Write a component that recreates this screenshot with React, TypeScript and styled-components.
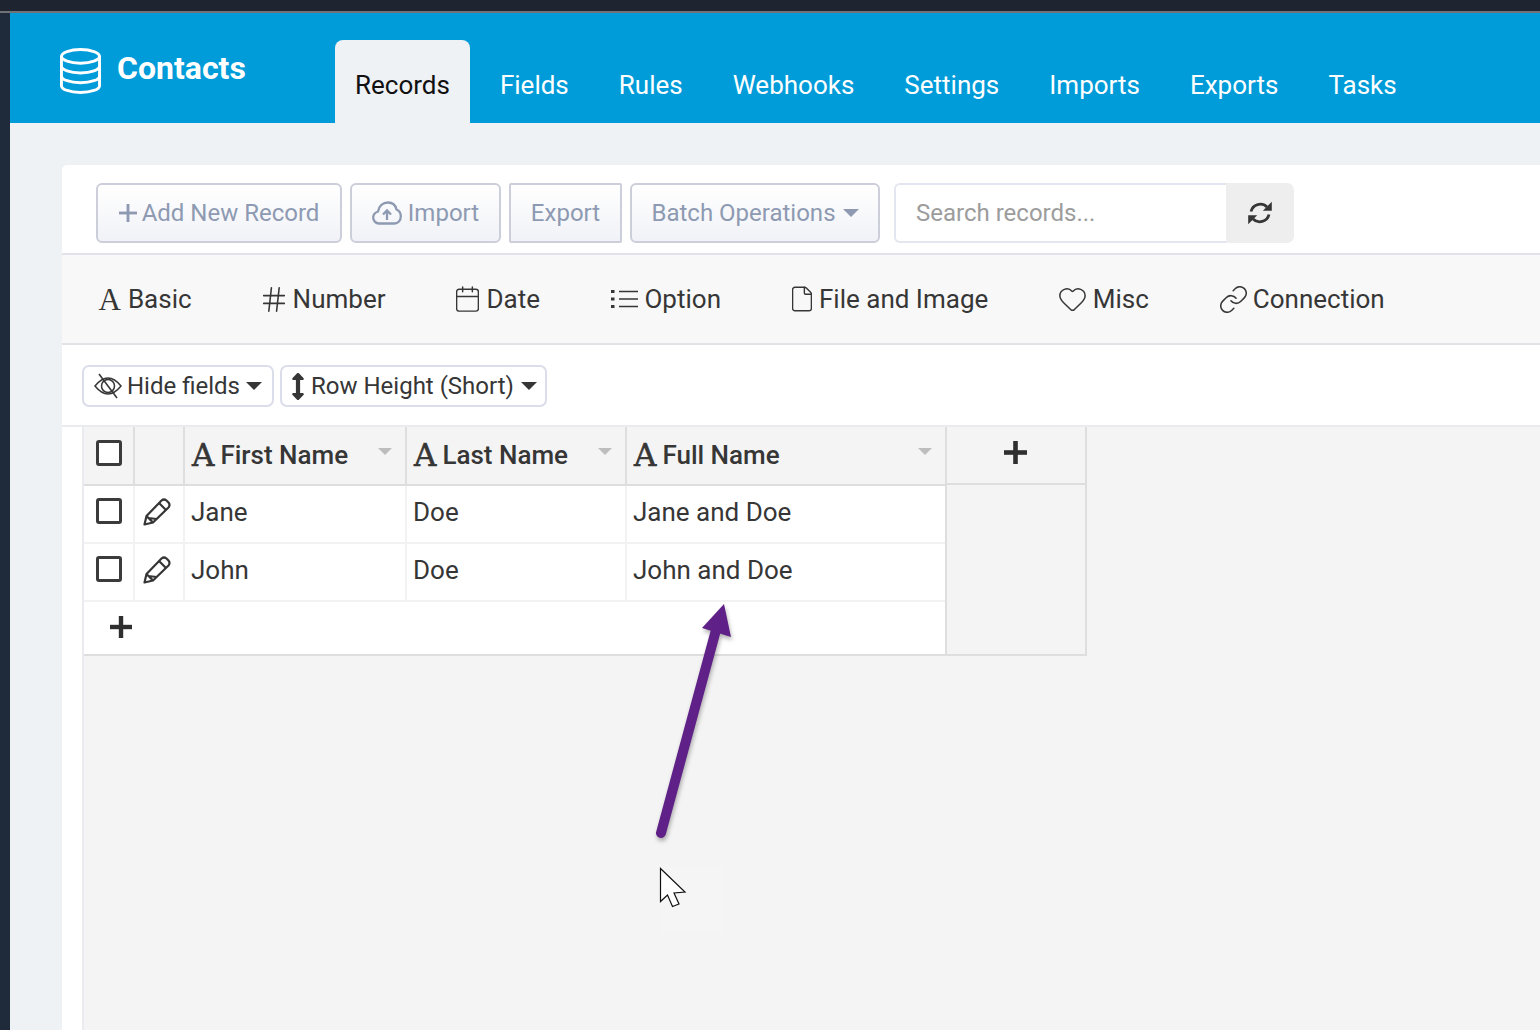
import React from "react";
import styled, { createGlobalStyle } from "styled-components";
import { Calendar, File, Hash, Heart, Link as LinkIcon, Plus } from "lucide-react";
import { FaArrowsAltV } from "react-icons/fa";

const Global = createGlobalStyle`
  html, body { margin: 0; padding: 0; height: 1030px; overflow: hidden; background: #eff2f5; }
  body { font-family: Roboto, "Liberation Sans", sans-serif; color: #363636; }
  * { box-sizing: border-box; }
`;

const Page = styled.div`
  position: relative;
  width: 1540px;
  height: 1030px;
  overflow: hidden;
  display: flex;
  flex-direction: column;
`;
const TopStrip = styled.div`
  height: 13px;
  flex: none;
  background: #1e2430;
  border-bottom: 2px solid #6f7378;
`;
const Body = styled.div`
  flex: 1;
  display: flex;
  min-height: 0;
`;
const Sidebar = styled.div`
  width: 10px;
  flex: none;
  background: #1f2a3a;
`;
const Main = styled.main`
  flex: 1;
  display: flex;
  flex-direction: column;
  min-width: 0;
`;
const Header = styled.header`
  height: 110px;
  flex: none;
  background: #009cd9;
  display: flex;
  align-items: flex-end;
  padding-left: 50px;
`;
const Brand = styled.div`
  width: 275px;
  align-self: flex-start;
  margin-top: 34px;
  display: flex;
  align-items: flex-start;
  gap: 16px;
  color: #fff;
`;
const BrandName = styled.span`
  font-size: 32px;
  font-weight: 700;
  line-height: 42px;
`;
const Tabs = styled.nav`
  display: flex;
  gap: 10px;
`;
const Tab = styled.div<{ $active?: boolean }>`
  height: 83px;
  padding: 6px 20px 0;
  display: flex;
  align-items: center;
  font-size: 26px;
  border-radius: 8px 8px 0 0;
  color: ${(p) => (p.$active ? "#111" : "#fff")};
  background: ${(p) => (p.$active ? "#eff2f5" : "transparent")};
`;
const Content = styled.div`
  flex: 1;
  padding: 42px 0 0 52px;
  min-height: 0;
`;
const Card = styled.section`
  height: 100%;
  background: #fff;
  border-radius: 5px 0 0 0;
  display: flex;
  flex-direction: column;
`;
const Toolbar = styled.div`
  height: 90px;
  flex: none;
  padding: 18px 0 0 34px;
  display: flex;
  align-items: flex-start;
  gap: 8px;
  border-bottom: 2px solid #e2e3ea;
`;
const ToolButton = styled.div<{ $w: number; $square?: boolean; $gap?: number }>`
  width: ${(p) => p.$w}px;
  height: 60px;
  display: flex;
  align-items: center;
  justify-content: center;
  gap: ${(p) => p.$gap ?? 5}px;
  border: 2px solid #ccced9;
  border-radius: ${(p) => (p.$square ? "2px" : "6px")};
  background: linear-gradient(#ffffff, #f1f2f7);
  color: #8d9ab2;
  font-size: 24px;
  white-space: nowrap;
`;
const Caret = styled.i<{ $color: string; $size?: number }>`
  display: inline-block;
  width: 0;
  height: 0;
  border-style: solid;
  border-color: ${(p) => p.$color} transparent transparent;
  border-width: ${(p) => p.$size ?? 8}px ${(p) => p.$size ?? 8}px 0;
  flex: none;
`;
const SearchGroup = styled.div`
  display: flex;
  margin-left: 6px;
  height: 60px;
`;
const SearchInput = styled.input`
  width: 332px;
  height: 60px;
  padding: 0 20px;
  border: 2px solid #e3e6f0;
  border-right: 0;
  border-radius: 6px 0 0 6px;
  outline: none;
  font: 24px Roboto, sans-serif;
  background: #fff;
  &::placeholder { color: #9c9c9c; opacity: 1; }
`;
const RefreshButton = styled.div`
  width: 68px;
  height: 60px;
  background: #eeeeee;
  border-radius: 0 7px 7px 0;
  display: flex;
  align-items: center;
  justify-content: center;
  color: #363636;
`;
const FieldTypes = styled.div`
  height: 90px;
  flex: none;
  background: #f8f8f8;
  border-bottom: 2px solid #e2e2e6;
  display: flex;
  align-items: center;
  padding-left: 36.5px;
  gap: 71px;
`;
const FieldType = styled.div<{ $gap: number }>`
  display: flex;
  align-items: center;
  gap: ${(p) => p.$gap}px;
  font-size: 26px;
  color: #363636;
`;
const SerifA = styled.span<{ $bold?: boolean }>`
  font-family: ${(p) => (p.$bold ? '"DejaVu Serif"' : '"Liberation Serif"')}, serif;
  font-size: 31px;
  font-weight: 400;
  line-height: 1;
  -webkit-text-stroke: ${(p) => (p.$bold ? "0.6px" : "0")} currentColor;
`;
const ViewBar = styled.div`
  height: 82px;
  flex: none;
  padding: 20px 0 0 20px;
  display: flex;
  align-items: flex-start;
  gap: 6px;
  border-bottom: 2px solid #e9ebef;
`;
const ViewButton = styled.div<{ $w: number; $pad: number }>`
  width: ${(p) => p.$w}px;
  height: 42px;
  display: flex;
  align-items: center;
  padding-left: ${(p) => p.$pad}px;
  border: 2px solid #dbdeea;
  border-radius: 7px;
  background: #fff;
  font-size: 24px;
  color: #363636;
  white-space: nowrap;
`;
const ViewLabel = styled.span<{ $before: number; $after: number }>`
  margin: 0 ${(p) => p.$after}px 0 ${(p) => p.$before}px;
`;
const GridArea = styled.div`
  flex: 1;
  margin-left: 20px;
  background: #f4f4f4;
  border-left: 2px solid #e9ebef;
  display: flex;
  align-items: flex-start;
  min-height: 0;
`;
const DataTable = styled.div`
  width: 863px;
  flex: none;
  background: #fff;
  border-bottom: 2px solid #dedede;
  border-right: 2px solid #dedede;
`;
const Row = styled.div<{ $head?: boolean }>`
  display: grid;
  grid-template-columns: 51px 50px 222px 220px 1fr;
  height: ${(p) => (p.$head ? 59 : 58)}px;
  background: ${(p) => (p.$head ? "#f4f4f4" : "#fff")};
  border-bottom: 2px solid ${(p) => (p.$head ? "#dedede" : "#f2f2f2")};
`;
const Cell = styled.div<{ $head?: boolean }>`
  position: relative;
  display: flex;
  align-items: center;
  padding: 0 0 ${(p) => (p.$head ? 1 : 4)}px ${(p) => (p.$head ? 7 : 6)}px;
  font-size: 26px;
  font-weight: ${(p) => (p.$head ? 500 : 400)};
  gap: 6px;
  color: #363636;
  border-right: 2px solid ${(p) => (p.$head ? "#dedede" : "#f2f2f2")};
  &:last-child { border-right: 0; }
`;
const IconCell = styled(Cell)`
  justify-content: center;
  padding: 0 0 ${(p) => (p.$head ? 5 : 6)}px;
`;
const Checkbox = styled.span`
  display: block;
  width: 26px;
  height: 26px;
  border: 3px solid #3b3b3b;
  border-radius: 3px;
  background: #fff;
`;
const SortCaret = styled.span`
  position: absolute;
  right: 13px;
  top: 21px;
  display: flex;
`;
const AddRow = styled.div`
  height: 52px;
  padding: 0 0 2px 26px;
  display: flex;
  align-items: center;
`;
const AddColumn = styled.div`
  width: 140px;
  flex: none;
  height: 229px;
  border-right: 2px solid #dedede;
  border-bottom: 2px solid #dedede;
`;
const AddColumnHead = styled.div`
  height: 58px;
  display: flex;
  align-items: center;
  padding: 0 0 6px 57px;
  border-bottom: 2px solid #dedede;
`;
const Annotation = styled.svg`
  position: absolute;
  left: 640px;
  top: 590px;
  pointer-events: none;
  overflow: visible;
  filter: drop-shadow(1px 3px 2px rgba(0, 0, 0, 0.3));
`;
const CursorHalo = styled.div`
  position: absolute;
  left: 660px;
  top: 866px;
  width: 64px;
  height: 66px;
  background: #f5f5f5;
`;
const CursorIcon = styled.svg`
  position: absolute;
  left: 655px;
  top: 864px;
`;

const ListIcon = () => (
  <svg width="27" height="20" viewBox="0 0 27 20" fill="none" stroke="#363636" strokeWidth="1.500">
    <path d="M8 2.500h19M8 10h19M8 17.500h19" />
    <path d="M0 2.500h3.500M0 10h3.500M0 17.500h3.500" strokeWidth="3" />
  </svg>
);
const PencilIcon = () => (
  <svg width="28" height="29" viewBox="0 0 28 29" fill="none" stroke="#363636" strokeWidth="2.200" strokeLinejoin="round" style={{ marginRight: 4 }}>
    <path d="M1.500 27.500 L3.500 19 L18.500 3.500 Q21 1.500 23.500 3.500 L25.500 5.500 Q27.500 8 25.500 10.500 L10 25.500 Z" />
    <path d="M16 6 L23 13 M3.500 19 L10 25.500 M5.500 21 L13.500 22" />
  </svg>
);
const EyeSlashIcon = () => (
  <svg width="28" height="26" viewBox="0 0 28 26" fill="none" stroke="#363636" strokeWidth="1.500">
    <path d="M1 13 Q14 -3 27 13 Q14 29 1 13 Z" />
    <circle cx="14" cy="13" r="6.500" />
    <path d="M5 1 L23 25" />
  </svg>
);
const CloudIcon = () => (
  <svg width="30" height="24" viewBox="0 0 30 24" fill="none" stroke="#8d9ab2" strokeWidth="2.300">
    <path d="M7 22.500 C3.500 22.500 1.200 19.500 1.200 16.500 C1.200 13.500 3 11.500 6 10.500 C7 5 11 1.500 16 1.500 C20 1.500 23.500 4 24.500 8.500 C27 9.500 28.800 12.500 28.800 15.500 C28.800 19.500 26 22.500 22.500 22.500 Z" />
    <path d="M15 19 V9.500 M11 13.500 L15 9.500 L19 13.500" />
  </svg>
);
const SyncIcon = () => (
  <svg width="24" height="24" viewBox="0 0 24 24" fill="#363636" stroke="none">
    <path d="M3 10.500 A9.500 9.500 0 0 1 19 6" fill="none" stroke="#363636" strokeWidth="2.800" />
    <polygon points="23.800,0.800 23.800,9.800 14.800,9.800" />
    <path d="M21 13.500 A9.500 9.500 0 0 1 5 18" fill="none" stroke="#363636" strokeWidth="2.800" />
    <polygon points="0.200,23.200 0.200,14.200 9.200,14.200" />
  </svg>
);

const tabs = ["Fields", "Rules", "Webhooks", "Settings", "Imports", "Exports", "Tasks"];
const thin = { strokeWidth: 1.2, color: "#363636" };
const fieldTypes = [
  { label: "Basic", gap: 7, icon: <SerifA>A</SerifA> },
  { label: "Number", gap: 8, icon: <Hash {...thin} width={22} height={25} viewBox="3.500 2.500 17 19" /> },
  { label: "Date", gap: 7, icon: <Calendar {...thin} width={23} height={26} viewBox="2.500 1.500 19 21" /> },
  { label: "Option", gap: 6.5, icon: <ListIcon /> },
  { label: "File and Image", gap: 7, icon: <File {...thin} width={20} height={26} viewBox="3.500 1.500 17 21" /> },
  { label: "Misc", gap: 6.5, icon: <Heart {...thin} width={27} height={24} viewBox="1.500 2.500 21 19" /> },
  { label: "Connection", gap: 6, icon: <LinkIcon {...thin} width={27} height={27} viewBox="1.500 1.500 21 21" /> },
];
const columns = ["First Name", "Last Name", "Full Name"];
const people = [
  ["Jane", "Doe", "Jane and Doe"],
  ["John", "Doe", "John and Doe"],
];

export default function App() {
  return (
    <Page>
      <Global />
      <TopStrip />
      <Body>
        <Sidebar />
        <Main>
          <Header>
            <Brand>
              <svg width="41" height="48" viewBox="0 0 42 48" fill="none" stroke="#fff" strokeWidth="3">
                <ellipse cx="21" cy="9" rx="19.500" ry="7" />
                <path d="M1.500 9v30c0 3.900 8.700 7 19.500 7s19.500-3.100 19.500-7V9" />
                <path d="M1.500 19c0 3.900 8.700 7 19.500 7s19.500-3.100 19.500-7" />
                <path d="M1.500 29c0 3.900 8.700 7 19.500 7s19.500-3.100 19.500-7" />
              </svg>
              <BrandName>Contacts</BrandName>
            </Brand>
            <Tabs>
              <Tab $active>Records</Tab>
              {tabs.map((t) => (
                <Tab key={t}>{t}</Tab>
              ))}
            </Tabs>
          </Header>
          <Content>
            <Card>
              <Toolbar>
                <ToolButton $w={246}>
                  <Plus size={18} viewBox="5 5 14 14" strokeWidth={2.200} strokeLinecap="butt" />
                  Add New Record
                </ToolButton>
                <ToolButton $w={151} $gap={6}>
                  <CloudIcon />
                  Import
                </ToolButton>
                <ToolButton $w={113} $square>Export</ToolButton>
                <ToolButton $w={250} $gap={7}>
                  Batch Operations
                  <Caret $color="#8d9ab2" />
                </ToolButton>
                <SearchGroup>
                  <SearchInput placeholder="Search records..." readOnly />
                  <RefreshButton>
                    <SyncIcon />
                  </RefreshButton>
                </SearchGroup>
              </Toolbar>
              <FieldTypes>
                {fieldTypes.map((f) => (
                  <FieldType key={f.label} $gap={f.gap}>
                    {f.icon}
                    {f.label}
                  </FieldType>
                ))}
              </FieldTypes>
              <ViewBar>
                <ViewButton $w={192} $pad={10}>
                  <EyeSlashIcon />
                  <ViewLabel $before={5} $after={6}>Hide fields</ViewLabel>
                  <Caret $color="#363636" />
                </ViewButton>
                <ViewButton $w={267} $pad={9}>
                  <FaArrowsAltV style={{ width: 14, height: 27 }} />
                  <ViewLabel $before={6} $after={7}>Row Height (Short)</ViewLabel>
                  <Caret $color="#363636" />
                </ViewButton>
              </ViewBar>
              <GridArea>
                <DataTable>
                  <Row $head>
                    <IconCell $head><Checkbox /></IconCell>
                    <IconCell $head />
                    {columns.map((c) => (
                      <Cell $head key={c}>
                        <SerifA $bold>A</SerifA>
                        {c}
                        <SortCaret><Caret $color="#bdbdbd" $size={7} /></SortCaret>
                      </Cell>
                    ))}
                  </Row>
                  {people.map((p) => (
                    <Row key={p[0]}>
                      <IconCell><Checkbox /></IconCell>
                      <IconCell><PencilIcon /></IconCell>
                      {p.map((v, i) => (
                        <Cell key={i}>{v}</Cell>
                      ))}
                    </Row>
                  ))}
                  <AddRow>
                    <Plus size={22} viewBox="5 5 14 14" strokeWidth={2.800} strokeLinecap="butt" color="#2f2f2f" />
                  </AddRow>
                </DataTable>
                <AddColumn>
                  <AddColumnHead>
                    <Plus size={23} viewBox="5 5 14 14" strokeWidth={2.800} strokeLinecap="butt" color="#2f2f2f" />
                  </AddColumnHead>
                </AddColumn>
              </GridArea>
            </Card>
          </Content>
        </Main>
      </Body>
      <CursorHalo />
      <Annotation width="110" height="260" viewBox="0 0 110 260">
        <line x1="21" y1="243" x2="76" y2="40" stroke="#5f2187" strokeWidth="10" strokeLinecap="round" />
        <polygon points="84,14 62,38 91,47" fill="#5f2187" />
      </Annotation>
      <CursorIcon width="36" height="46" viewBox="0 0 36 46">
        <path d="M5.500 4.500 L30 28 L19 29 L24 40 L17.500 42.500 L12.500 31 L5.500 37.500 Z" fill="#fff" stroke="#111" strokeWidth="1.200" />
      </CursorIcon>
    </Page>
  );
}
